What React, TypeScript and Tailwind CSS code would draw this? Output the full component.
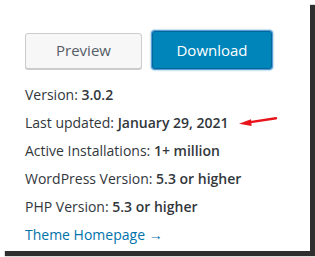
import React from "react";

const rows = [
  { label: "Version:", value: "3.0.2" },
  { label: "Last updated:", value: "January 29, 2021", arrow: true },
  { label: "Active Installations:", value: "1+ million" },
  { label: "WordPress Version:", value: "5.3 or higher" },
  { label: "PHP Version:", value: "5.3 or higher" },
];

const RedArrow = () => (
  <svg width="40" height="12" viewBox="0 0 40 12" className="ml-[10px] shrink-0">
    <path d="M8 6.6 L37 2.2" stroke="#e8141b" strokeWidth="2.4" strokeLinecap="round" />
    <polygon points="0,7.8 12,3.2 12.6,10" fill="#e8141b" />
  </svg>
);

export default function App() {
  return (
    <div className="w-[315px] h-[257px] bg-white overflow-hidden" style={{ fontFamily: '"Open Sans", sans-serif' }}>
      <div className="w-[310px] h-[251px] bg-white shadow-[5px_5px_1px_rgba(35,35,35,0.95)] pl-[25px] pt-[31px]">
        {/* buttons */}
        <div className="flex items-center gap-[10px]">
          <button className="w-[117px] h-[36px] mt-px bg-[#f7f7f7] border border-[#cccccc] rounded-[3px] text-[15px] text-[#555d66] shadow-[0_1px_0_#ccc]">
            Preview
          </button>
          <button className="w-[120px] h-[38px] bg-[#0085ba] border border-[#006799] rounded-[3px] text-[15px] text-white shadow-[0_0_0_1px_#5b9dd9,0_0_2px_1px_rgba(30,140,190,0.8)]">
            Download
          </button>
        </div>

        {/* meta */}
        <div className="mt-[11px] text-[14px] text-[#32373c]">
          {rows.map((r) => (
            <div key={r.label} className="h-[28px] flex items-center">
              <span>{r.label}&nbsp;</span>
              <span className="font-semibold">{r.value}</span>
              {r.arrow && <RedArrow />}
            </div>
          ))}
          <div className="h-[28px] flex items-center">
            <a className="text-[#0073aa]">Theme Homepage →</a>
          </div>
        </div>
      </div>
    </div>
  );
}
